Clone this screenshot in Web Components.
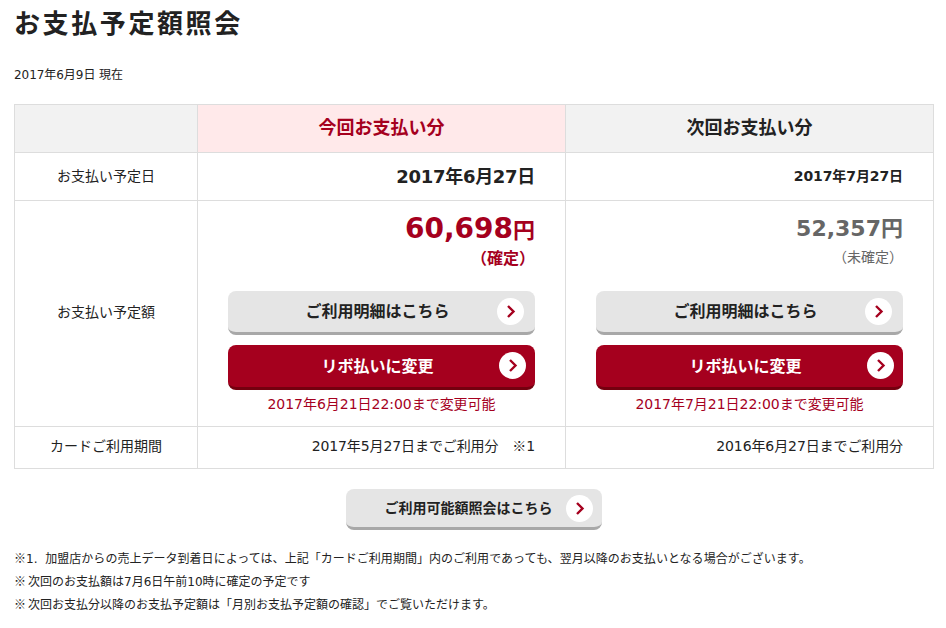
<!DOCTYPE html>
<html lang="ja">
<head>
<meta charset="utf-8">
<title>お支払予定額照会</title>
<style>
  html, body { margin: 0; padding: 0; background: #fff; }
  body { font-family: "DejaVu Sans", "Noto Sans CJK JP", sans-serif; color: #222; }
  .kome { font-family: "Noto Sans CJK JP", sans-serif; line-height: 0; }
  .gap { margin-right: 2px; }
</style>
</head>
<body>
<pay-page>
  <span slot="title">お支払予定額照会</span>
  <span slot="date">2017年6月9日 現在</span>
  <pay-table>
    <pay-cell kind="blank"></pay-cell>
    <pay-cell kind="head-now">今回お支払い分</pay-cell>
    <pay-cell kind="head-next">次回お支払い分</pay-cell>

    <pay-cell kind="label-top">お支払い予定日</pay-cell>
    <pay-cell kind="date-big">2017年6月27日</pay-cell>
    <pay-cell kind="date-small">2017年7月27日</pay-cell>

    <pay-cell kind="label">お支払い予定額</pay-cell>
    <pay-cell kind="amount">
      <pay-amount value="60,698" note="（確定）" tone="now"></pay-amount>
      <pay-button>ご利用明細はこちら</pay-button>
      <pay-button variant="red">リボ払いに変更</pay-button>
      <pay-deadline>2017年6月21日22:00まで変更可能</pay-deadline>
    </pay-cell>
    <pay-cell kind="amount">
      <pay-amount value="52,357" note="（未確定）" tone="next"></pay-amount>
      <pay-button>ご利用明細はこちら</pay-button>
      <pay-button variant="red">リボ払いに変更</pay-button>
      <pay-deadline>2017年7月21日22:00まで変更可能</pay-deadline>
    </pay-cell>

    <pay-cell kind="label">カードご利用期間</pay-cell>
    <pay-cell kind="period"><span>2017年5月27日までご利用分　<span class="kome">※</span>1</span></pay-cell>
    <pay-cell kind="period">2016年6月27日までご利用分</pay-cell>
  </pay-table>
  <pay-button slot="action" variant="small">ご利用可能額照会はこちら</pay-button>
  <pay-notes slot="notes">
    <div style="letter-spacing:.03px"><span class="kome">※</span>1.&nbsp; 加盟店からの売上データ到着日によっては、上記「カードご利用期間」内のご利用であっても、翌月以降のお支払いとなる場合がございます。</div>
    <div><span class="kome gap">※</span>次回のお支払額は7月6日午前10時に確定の予定です</div>
    <div><span class="kome gap">※</span>次回お支払分以降のお支払予定額は「月別お支払予定額の確認」でご覧いただけます。</div>
  </pay-notes>
</pay-page>

<script>
class PayPage extends HTMLElement {
  constructor(){
    super();
    this.attachShadow({mode:"open"});
    this.shadowRoot.innerHTML = `
      <style>
        :host { display: block; padding: 0 14px 0 14px; width: 920px; }
        h1 { margin: 0; padding-top: 7px; font-size: 26px; line-height: 34px; font-weight: 700; letter-spacing: 2.6px; }
        .date { margin: 25px 0 20px; font-size: 12px; line-height: 18px; letter-spacing: -.05px; }
        .action { display: flex; justify-content: center; margin: 20px 0 18px; padding-right: 1px; }
      </style>
      <h1><slot name="title"></slot></h1>
      <div class="date"><slot name="date"></slot></div>
      <slot></slot>
      <div class="action"><slot name="action"></slot></div>
      <slot name="notes"></slot>
    `;
  }
}

class PayTable extends HTMLElement {
  constructor(){
    super();
    this.attachShadow({mode:"open"});
    this.shadowRoot.innerHTML = `
      <style>
        :host {
          display: grid;
          grid-template-columns: 183px 368px 368px;
          grid-template-rows: 48px 48px 226px 42px;
          border-top: 1px solid #ddd;
          border-left: 1px solid #ddd;
        }
      </style>
      <slot></slot>
    `;
  }
}

class PayCell extends HTMLElement {
  constructor(){
    super();
    this.attachShadow({mode:"open"});
    this.shadowRoot.innerHTML = `
      <style>
        :host {
          display: flex;
          align-items: center;
          box-sizing: border-box;
          border-right: 1px solid #ddd;
          border-bottom: 1px solid #ddd;
          padding: 0 30px 5px;
          font-size: 14px;
          justify-content: flex-end;
        }
        :host([kind="blank"]) { background: #f2f2f2; }
        :host([kind="head-now"]), :host([kind="head-next"]) {
          justify-content: center; font-size: 18px; font-weight: 700;
        }
        :host([kind="head-now"]) { background: #ffe9ea; color: #a5001e; }
        :host([kind="head-next"]) { background: #f2f2f2; }
        :host([kind="label"]) { justify-content: center; padding: 0 0 5px; }
        :host([kind="label-top"]) { justify-content: center; padding: 0 0 4px; }
        :host([kind="period"]) { letter-spacing: -.1px; }
        :host([kind="date-big"]) { font-size: 18px; font-weight: 700; letter-spacing: -.3px; padding-bottom: 3px; }
        :host([kind="date-small"]) { font-size: 14px; font-weight: 700; letter-spacing: -.1px; padding-bottom: 3px; }
        :host([kind="amount"]) {
          flex-direction: column; align-items: stretch; justify-content: flex-start; padding-bottom: 0;
        }
      </style>
      <slot></slot>
    `;
  }
}

class PayAmount extends HTMLElement {
  constructor(){
    super();
    this.attachShadow({mode:"open"});
  }
  connectedCallback(){
    const now = this.getAttribute("tone") === "now";
    this.shadowRoot.innerHTML = `
      <style>
        :host {
          display: block; text-align: right; font-weight: ${now ? 700 : 400};
          color: ${now ? "#a5001e" : "#666"};
          height: 90px;
        }
        .sum { font-weight: 700; line-height: 36px; padding-top: 10px; font-size: ${now ? 28 : 22}px; }
        .yen { font-size: 22px; }
        .note { font-size: ${now ? 16 : 14}px; line-height: 20px; margin-top: 0; }
      </style>
      <div class="sum">${this.getAttribute("value")}<span class="yen">円</span></div>
      <div class="note">${this.getAttribute("note")}</div>
    `;
  }
}

class PayButton extends HTMLElement {
  constructor(){
    super();
    this.attachShadow({mode:"open"});
    this.shadowRoot.innerHTML = `
      <style>
        :host {
          display: flex; align-items: center; justify-content: center;
          box-sizing: border-box; position: relative;
          height: 44px; margin-bottom: 10px;
          background: #e5e5e5; border-bottom: 3px solid #a8a8a8; border-radius: 8px;
          font-size: 16px; font-weight: 700; color: #222;
          padding: 0 8px 4px 0;
        }
        :host([variant="red"]) {
          height: 45px; margin-bottom: 0; padding-bottom: 2px;
          background: #a5001e; border-bottom-color: #74000f; color: #fff;
        }
        :host([variant="small"]) {
          width: 256px; height: 41px; margin: 0; font-size: 14px; padding: 0 10px 2px 0;
        }
        svg { position: absolute; right: 11px; top: 7px; width: 27px; height: 27px; }
        :host([variant="red"]) svg { right: 9px; top: 7px; }
        :host([variant="small"]) svg { right: 9px; top: 6px; }
        .mark { stroke: #a5001e; }
      </style>
      <slot></slot>
      <svg viewBox="0 0 27 27" aria-hidden="true">
        <circle cx="13.5" cy="13.5" r="13.5" fill="#fff"/>
        <path class="mark" d="M11 8 L16.5 13.5 L11 19" fill="none" stroke-width="2.4"/>
      </svg>
    `;
  }
}

class PayDeadline extends HTMLElement {
  constructor(){
    super();
    this.attachShadow({mode:"open"});
    this.shadowRoot.innerHTML = `
      <style>
        :host { display: block; text-align: center; font-size: 14px; line-height: 20px; margin-top: 4px; color: #a5001e; letter-spacing: -.03px; }
      </style>
      <slot></slot>
    `;
  }
}

class PayNotes extends HTMLElement {
  constructor(){
    super();
    this.attachShadow({mode:"open"});
    this.shadowRoot.innerHTML = `
      <style>
        :host { display: block; font-size: 12px; line-height: 23px; }
      </style>
      <slot></slot>
    `;
  }
}

customElements.define("pay-page", PayPage);
customElements.define("pay-table", PayTable);
customElements.define("pay-cell", PayCell);
customElements.define("pay-amount", PayAmount);
customElements.define("pay-button", PayButton);
customElements.define("pay-deadline", PayDeadline);
customElements.define("pay-notes", PayNotes);
</script>
</body>
</html>
